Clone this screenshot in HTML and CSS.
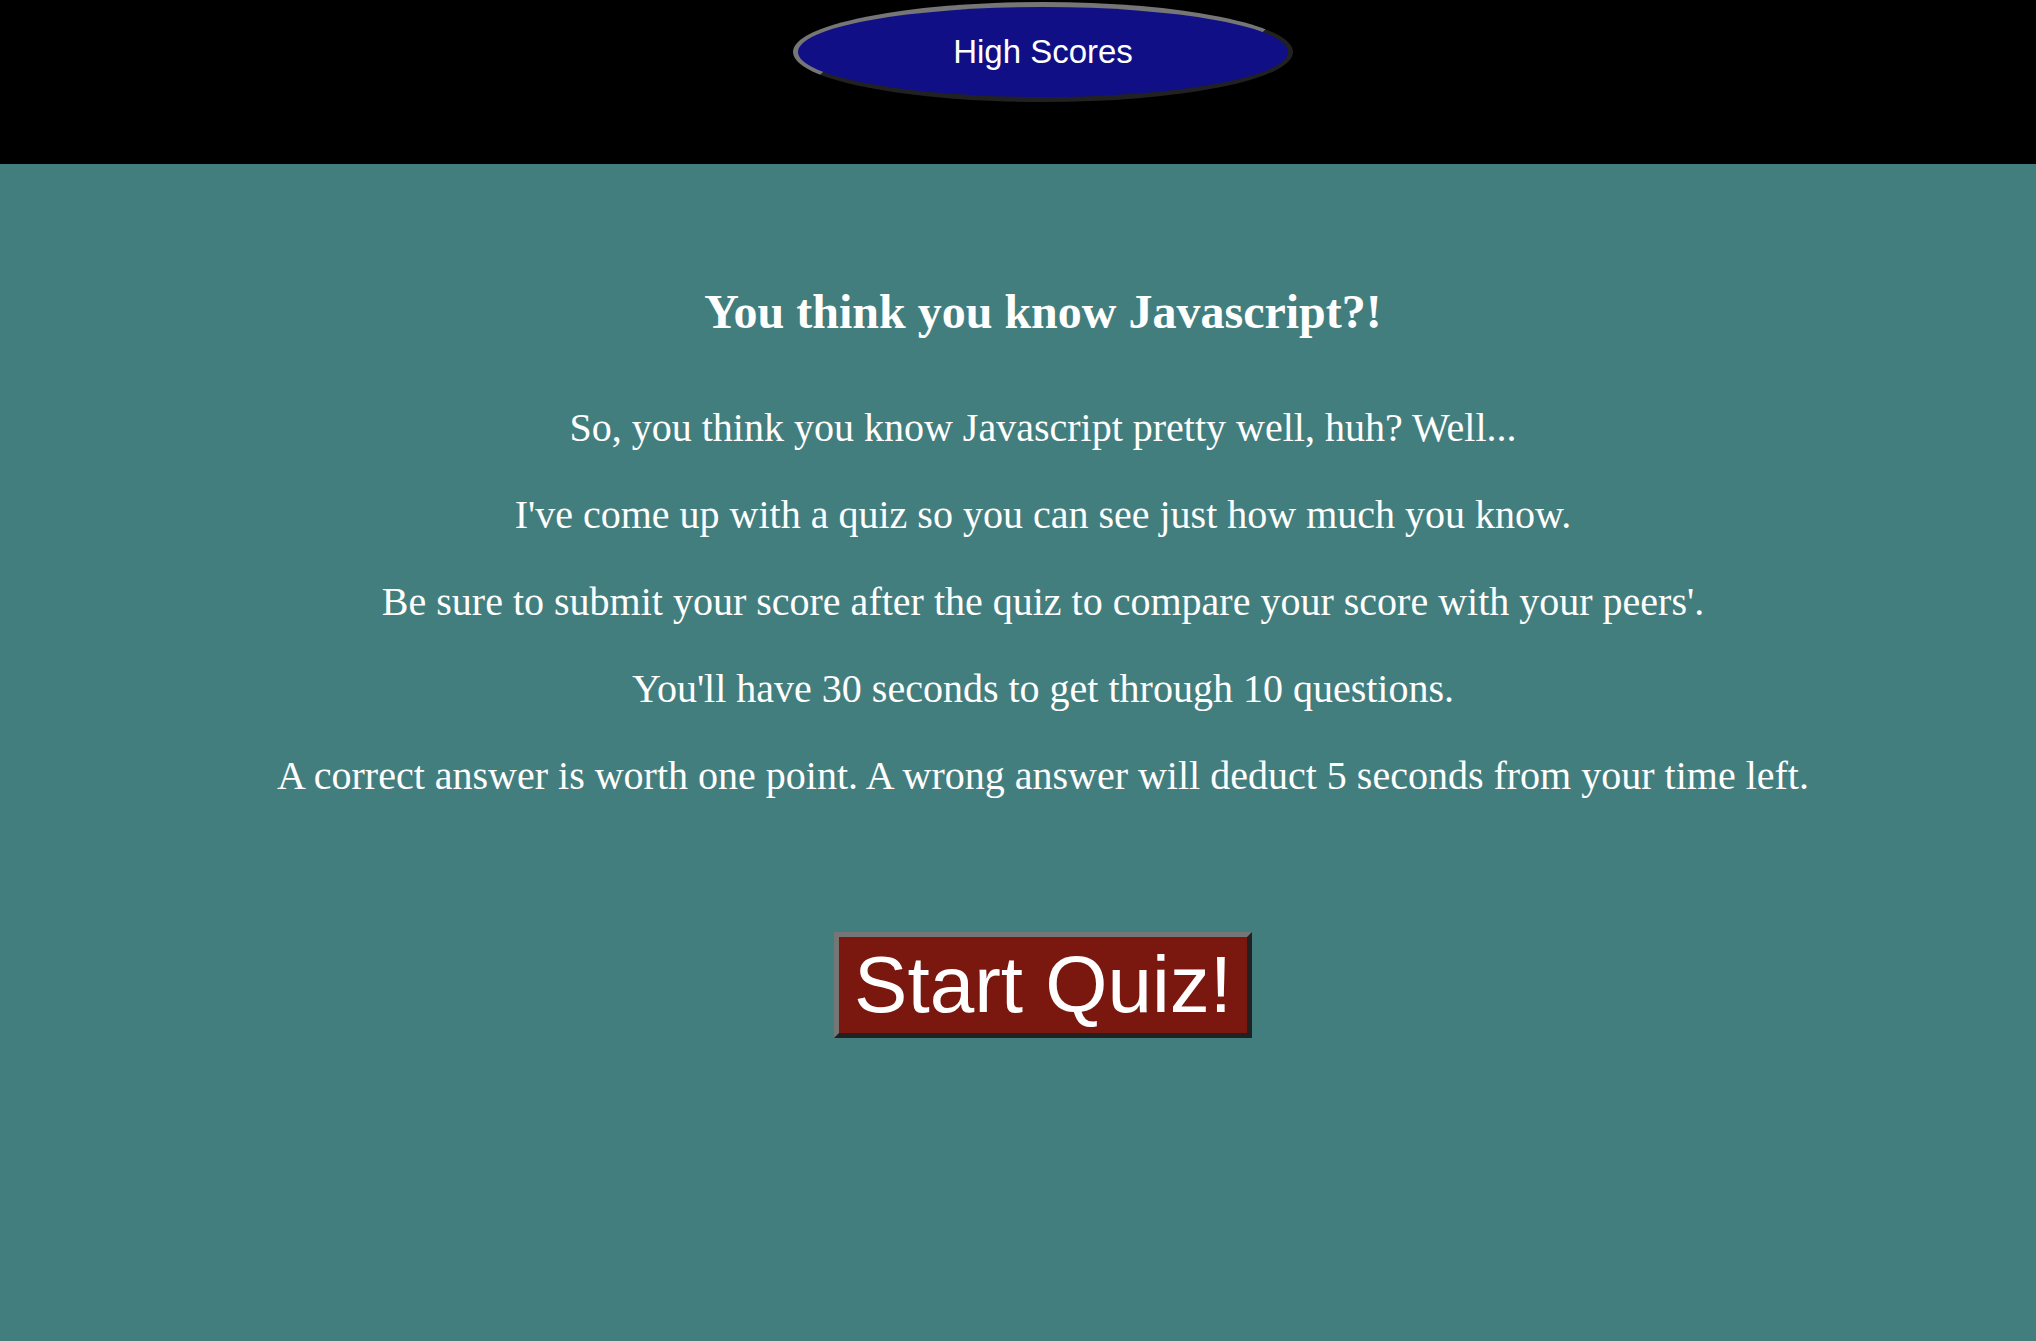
FILE: index.html
```html
<!DOCTYPE html>
<html lang="en">
<head>
<meta charset="utf-8">
<title>Javascript Quiz</title>
<link rel="stylesheet" href="styles.css">
</head>
<body>
<header class="header">
<button class="scores" type="button">High Scores</button>
</header>
<main class="intro">
<h1 class="title">You think you know Javascript?!</h1>
<p class="line">So, you think you know Javascript pretty well, huh? Well...</p>
<p class="line">I've come up with a quiz so you can see just how much you know.</p>
<p class="line">Be sure to submit your score after the quiz to compare your score with your peers'.</p>
<p class="line">You'll have 30 seconds to get through 10 questions.</p>
<p class="line">A correct answer is worth one point. A wrong answer will deduct 5 seconds from your time left.</p>
<button class="start" type="button">Start Quiz!</button>
</main>
</body>
</html>
```

FILE: styles.css
```css
body {
  margin: 0;
  background: #437e7e;
  color: #fff;
  font-family: "Liberation Serif", "Times New Roman", serif;
}

.header {
  display: flex;
  justify-content: center;
  padding: 2px 0 62px 50px;
  background: #000;
}

.scores {
  width: 500px;
  height: 100px;
  border: 5px outset #767676;
  border-radius: 50%;
  background: #110f85;
  color: #fff;
  font: 33px "Liberation Sans", Arial, sans-serif;
}

.intro {
  display: flex;
  flex-direction: column;
  align-items: center;
  padding: 120px 0 120px 50px;
  text-align: center;
}

.title {
  margin: 0 0 64px;
  font-size: 48px;
  line-height: 56px;
}

.line {
  margin: 0 0 40px;
  font-size: 40px;
  line-height: 47px;
}

.start {
  margin-top: 93px;
  padding: 2px 15px;
  border: 5px outset #767676;
  background: #7a170f;
  color: #fff;
  font: 80px "Liberation Sans", Arial, sans-serif;
}
```
